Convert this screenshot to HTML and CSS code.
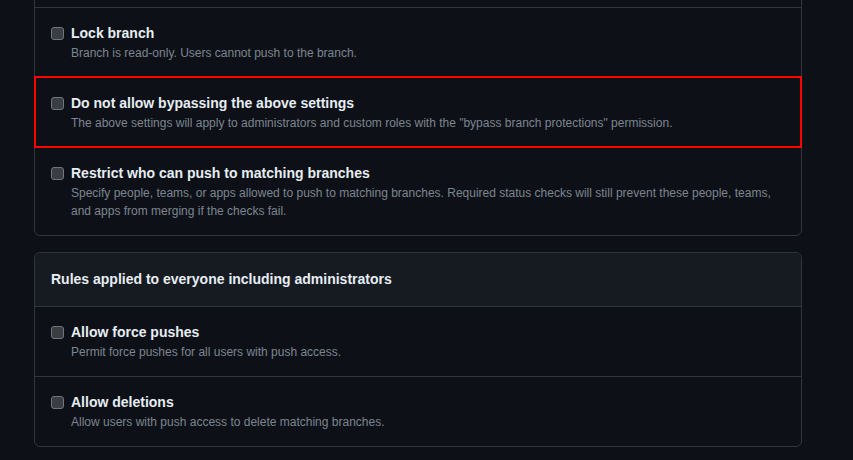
FILE: index.html
```html
<!DOCTYPE html>
<html lang="en">
<head>
<meta charset="utf-8">
<title>Branch protection</title>
<link rel="stylesheet" href="styles.css">
</head>
<body>
<div class="page">
  <section class="card card-first">
    <div class="row row-prev"></div>
    <label class="row">
      <input type="checkbox" class="check">
      <span class="text">
        <span class="title">Lock branch</span>
        <span class="desc">Branch is read-only. Users cannot push to the branch.</span>
      </span>
    </label>
    <label class="row row-highlight">
      <input type="checkbox" class="check">
      <span class="text">
        <span class="title">Do not allow bypassing the above settings</span>
        <span class="desc">The above settings will apply to administrators and custom roles with the "bypass branch protections" permission.</span>
      </span>
    </label>
    <label class="row">
      <input type="checkbox" class="check">
      <span class="text">
        <span class="title">Restrict who can push to matching branches</span>
        <span class="desc">Specify people, teams, or apps allowed to push to matching branches. Required status checks will still prevent these people, teams, and apps from merging if the checks fail.</span>
      </span>
    </label>
  </section>

  <section class="card">
    <div class="card-header">Rules applied to everyone including administrators</div>
    <label class="row">
      <input type="checkbox" class="check">
      <span class="text">
        <span class="title">Allow force pushes</span>
        <span class="desc">Permit force pushes for all users with push access.</span>
      </span>
    </label>
    <label class="row">
      <input type="checkbox" class="check">
      <span class="text">
        <span class="title">Allow deletions</span>
        <span class="desc">Allow users with push access to delete matching branches.</span>
      </span>
    </label>
  </section>
</div>
</body>
</html>
```

FILE: styles.css
```css
* { box-sizing: border-box; }

html, body {
  margin: 0;
  padding: 0;
  background: #0d1117;
}

body {
  font-family: "Liberation Sans", Arial, Helvetica, sans-serif;
  color: #e6edf3;
  overflow: hidden;
  height: 460px;
}

.page {
  display: flex;
  flex-direction: column;
  gap: 16px;
  width: 768px;
  margin-left: 34px;
}

.card {
  border: 1px solid #30363d;
  border-radius: 6px;
  background: #0d1117;
  display: flex;
  flex-direction: column;
}

.card-first {
  margin-top: -20px;
}

.row {
  display: flex;
  align-items: flex-start;
  gap: 7px;
  padding: 16px 16px 15px 16px;
  border-top: 1px solid #30363d;
  cursor: pointer;
}

.row:first-child {
  border-top: 0;
}

.row-prev {
  height: 26px;
  padding: 0;
}

.row-highlight {
  outline: 2px solid #ff0000;
  outline-offset: -1px;
  position: relative;
  z-index: 1;
}

.check {
  appearance: none;
  -webkit-appearance: none;
  width: 13px;
  height: 13px;
  margin: 3px 0 0 0;
  flex: none;
  border: 1px solid #6e7681;
  border-radius: 3px;
  background: #3a3d42;
}

.text {
  display: flex;
  flex-direction: column;
}

.title {
  font-size: 14px;
  font-weight: 700;
  line-height: 19px;
  margin-bottom: 1px;
  color: #e6edf3;
}

.desc {
  font-size: 12px;
  line-height: 18px;
  color: #7d8590;
}

.card-header {
  background: #161b22;
  padding: 16px;
  font-size: 14px;
  font-weight: 700;
  line-height: 21px;
  color: #e6edf3;
  border-radius: 6px 6px 0 0;
}

.card-header + .row {
  border-top: 1px solid #30363d;
}
```
